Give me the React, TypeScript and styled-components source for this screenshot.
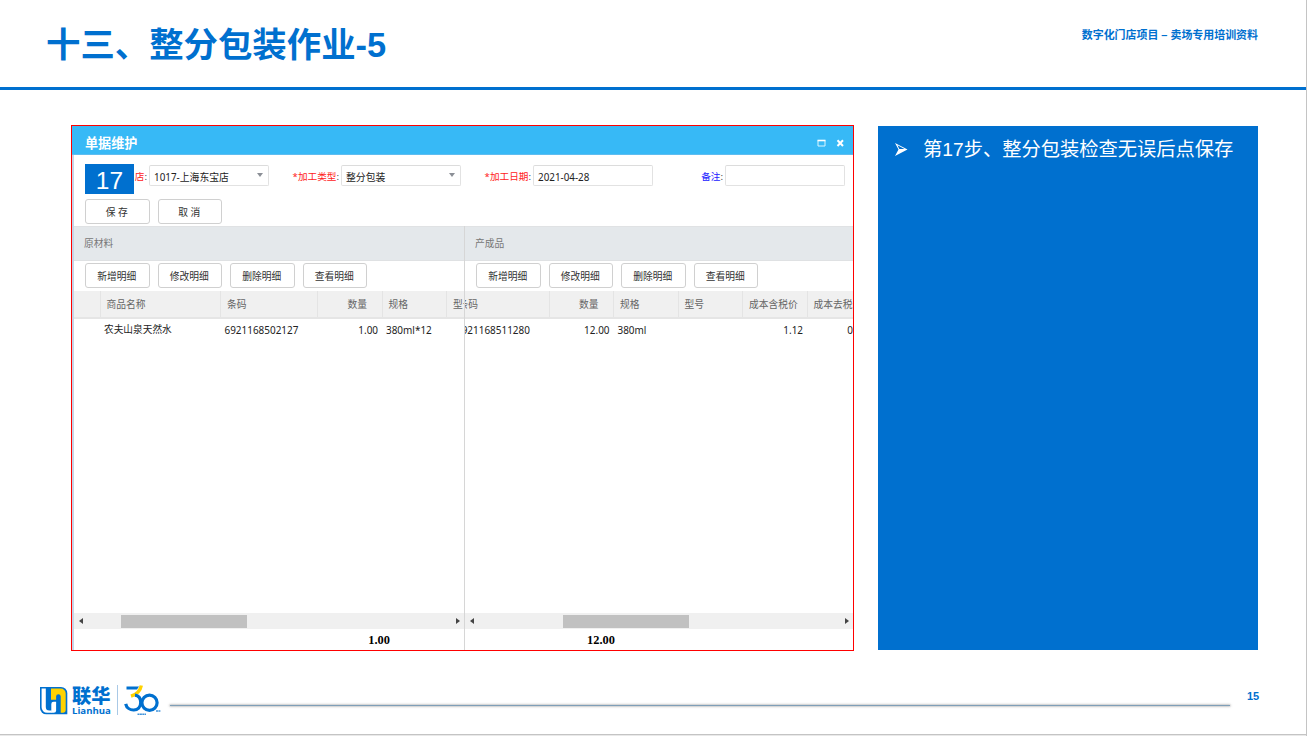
import React from 'react';
import styled, { createGlobalStyle } from 'styled-components';

const BLUE = '#0070cf';

const GlobalStyle = createGlobalStyle`
  * { box-sizing: border-box; }
  body {
    margin: 0;
    background: #fff;
    font-family: "Liberation Sans", "Noto Sans CJK SC", sans-serif;
  }
`;

const Slide = styled.div`
  width: 1307px;
  height: 736px;
  display: flex;
  flex-direction: column;
  background: #fff;
  border-right: 1px solid #c4c4c4;
  overflow: hidden;
`;

const Header = styled.header`
  height: 90px;
  flex: none;
  display: flex;
  justify-content: space-between;
  border-bottom: 3px solid ${BLUE};
  padding: 0 48px 0 46px;
  color: ${BLUE};
  font-weight: 700;
  white-space: nowrap;
`;

const Title = styled.h1`
  margin: 0;
  padding-top: 20px;
  font-size: 34.4px;
  line-height: 50px;
`;

const Project = styled.div`
  padding-top: 25px;
  font-size: 10.95px;
  line-height: 20px;
`;

const Main = styled.main`
  height: 561px;
  flex: none;
  display: flex;
  gap: 24px;
  padding: 35px 48px 0 71px;
`;

const Dialog = styled.section`
  width: 783px;
  height: 526px;
  display: flex;
  flex-direction: column;
  border: 1px solid #f00;
  font-family: "Noto Sans", "Noto Sans CJK SC", sans-serif;
  font-size: 9.75px;
  color: #222;
  white-space: nowrap;
  overflow: hidden;
`;

const TitleBar = styled.div`
  height: 29px;
  flex: none;
  display: flex;
  align-items: center;
  gap: 10px;
  padding: 5px 8px 0 13px;
  background: #37b9f6;
  border-bottom: 1px solid #5fbdf0;
  color: #fff;
`;

const DialogTitle = styled.div`
  flex: 1;
  font-size: 13.1px;
  font-weight: 700;
  line-height: 18px;
`;

const DialogBody = styled.div`
  flex: 1;
  display: flex;
  flex-direction: column;
  min-height: 0;
  border-left: 2px solid #c6d5e6;
`;

const Form = styled.div`
  height: 71px;
  flex: none;
  position: relative;
`;

const Fields = styled.div`
  display: flex;
  padding: 10px 0 0 3px;
`;

const Field = styled.div`
  width: 192px;
  display: flex;
  align-items: center;
`;

const Label = styled.label<{ $tone: string }>`
  width: 72px;
  padding: 2px 2px 0 0;
  text-align: right;
  color: ${(p) => p.$tone};
  font-size: 9.65px;
  line-height: 14px;
  span { color: #444; }
`;

const Input = styled.div`
  width: 120px;
  height: 21px;
  display: flex;
  align-items: center;
  justify-content: space-between;
  padding: 2px 5px 0 4px;
  border: 1px solid #e2e2e2;
  border-top-color: #dcdcdc;
  border-radius: 2px;
  font-size: 9.85px;
  line-height: 14px;
`;

const Caret = styled.i`
  border: 3.5px solid transparent;
  border-top: 4.5px solid #8b8f96;
  border-bottom: 0;
  margin-bottom: 4px;
`;

const StepBadge = styled.div`
  position: absolute;
  left: 11px;
  top: 9px;
  width: 49px;
  height: 30px;
  background: ${BLUE};
  color: #fff;
  font: 24.5px/33px "Liberation Sans", sans-serif;
  text-align: center;
`;

const Actions = styled.div<{ $top: number; $left?: number }>`
  display: flex;
  gap: 8px;
  padding: ${(p) => p.$top}px 0 0 ${(p) => p.$left ?? 11}px;
`;

const Button = styled.button`
  width: 64.5px;
  height: 25px;
  flex: none;
  padding: 2px 1px 0 0;
  border: 1px solid #d0d0d0;
  border-radius: 3px;
  background: #fff;
  font: inherit;
  line-height: 14px;
  color: #333;
`;

const Panes = styled.div`
  flex: 1;
  display: flex;
  min-height: 0;
`;

const Pane = styled.div<{ $width: number; $divided?: boolean }>`
  width: ${(p) => p.$width}px;
  flex: none;
  display: flex;
  flex-direction: column;
  overflow: hidden;
  border-right: ${(p) => (p.$divided ? '1px solid #d6d6d6' : '0')};
`;

const PaneTitle = styled.div`
  height: 35px;
  flex: none;
  padding-left: 10px;
  background: #e4e8eb;
  border-top: 1px solid #e0e2e4;
  border-bottom: 1px solid #dfe1e3;
  color: #777;
  line-height: 34px;
`;

const Tools = styled.div`
  height: 30px;
  flex: none;
`;

const Table = styled.div<{ $shift: number }>`
  flex: 1;
  margin-left: ${(p) => p.$shift}px;
`;

const HeadRow = styled.div`
  height: 28px;
  display: flex;
  background: #f0f0f0;
  border-bottom: 2px solid #e5e5e5;
  color: #666;
`;

const Row = styled.div`
  height: 24px;
  display: flex;
`;

const Cell = styled.div<{ $w: number; $right?: boolean; $head?: boolean }>`
  width: ${(p) => p.$w}px;
  flex: none;
  padding: ${(p) => (p.$head ? '0 14.5px 0 6px' : '0 4.5px 0 3.5px')};
  border-right: ${(p) => (p.$head ? '1px solid #e4e4e4' : '0')};
  text-align: ${(p) => (p.$right ? 'right' : 'left')};
  line-height: ${(p) => (p.$head ? 28 : 22)}px;
`;

const Value = styled.span<{ $latin: boolean }>`
  font-size: ${(p) => (p.$latin ? 9.95 : 9.7)}px;
`;

const ScrollBar = styled.div`
  height: 16px;
  flex: none;
  display: flex;
  align-items: center;
  background: #f0f0f0;
  padding: 0 4px 0 5px;
`;

const Arrow = styled.i<{ $dir: 'left' | 'right' }>`
  border: 3.5px solid transparent;
  border-${(p) => (p.$dir === 'left' ? 'right' : 'left')}: 4px solid #444;
  border-${(p) => p.$dir}: 0;
`;

const Track = styled.div<{ $before: number }>`
  flex: 1;
  padding-left: ${(p) => p.$before}px;
`;

const Thumb = styled.div`
  width: 126px;
  height: 13px;
  background: #c1c1c1;
`;

const Total = styled.div<{ $end: number }>`
  height: 21px;
  flex: none;
  width: ${(p) => p.$end}px;
  text-align: right;
  font: 700 12.4px/22px "Liberation Serif", serif;
  color: #000;
`;

const Note = styled.aside`
  width: 380px;
  height: 524px;
  margin-top: 1px;
  display: flex;
  align-items: flex-start;
  gap: 15px;
  padding: 9px 0 0 16px;
  background: ${BLUE};
  color: #fff;
  font-size: 19.25px;
  line-height: 29px;
  white-space: nowrap;
  svg { margin-top: 7px; flex: none; }
`;

const Footer = styled.footer`
  height: 83px;
  flex: none;
  display: flex;
  padding: 33px 46px 0 38px;
`;

const Brand = styled.div`
  width: 132px;
  display: flex;
`;

const BrandName = styled.div`
  width: 39px;
  margin-left: 4px;
  color: ${BLUE};
  white-space: nowrap;
`;

const BrandCn = styled.div`
  font: 900 19.2px/20px "Noto Sans CJK SC", sans-serif;
  margin-top: 1px;
`;

const BrandEn = styled.div`
  font: 700 9.6px/10px "Open Sans", sans-serif;
  margin-top: 1px;
`;

const BrandRule = styled.div`
  width: 1px;
  height: 30px;
  margin: 1px 6px 0;
  background: #a9c9e6;
`;

const FooterLine = styled.div`
  width: 1060px;
  height: 1px;
  margin-top: 21px;
  background: #7f9fb8;
  box-shadow: 0 0 2px 0.5px rgba(90, 90, 90, 0.5);
`;

const PageNumber = styled.div`
  margin-left: 17px;
  color: ${BLUE};
  font-size: 11px;
  font-weight: 700;
  line-height: 12px;
  padding-top: 6px;
`;

const BottomEdge = styled.div`
  height: 2px;
  flex: none;
  background: #e9e9e9;
  border-top: 1px solid #c4c4c4;
`;

const LogoMark = () => (
  <svg width="30" height="32" viewBox="-2 -3 30 32">
    <path d="M0 0h21a6.300 6.300 0 0 1 6.300 6.300v21H6.300A6.300 6.300 0 0 1 0 21z" fill={BLUE} />
    <path d="M1.600 1.500h4.200v18.500a3.500 3.500 0 0 0 3.500 3.500h2.500v2.300H7a5.500 5.500 0 0 1-5.400-5.500z" fill="#fff" />
    <path d="M11 1.500h9.700a5 5 0 0 1 5 5v16.800a2.400 2.400 0 0 1-2.400 2.400h-2.600V9.500a2.300 2.300 0 0 0-4.600 0v3.300H11z" fill="#ffd200" />
    <path d="M11.300 25.800V17a2.300 2.300 0 0 1 2.300-2.300h2.500v8.600a2.500 2.500 0 0 1-2.500 2.500z" fill="#fff" />
  </svg>
);

const Anniversary = () => (
  <svg width="37" height="32" viewBox="0 0 37 32">
    <path d="M2.500 2.500h12.500l-2 3h-10.500z" fill={BLUE} />
    <path d="M17.300 1.500c-1 5.500-4.300 8.800-10.300 10.700" stroke="#ffd200" strokeWidth="3.400" fill="none" />
    <path d="M11 11.200c4 .5 5.700 3.600 5.700 7.300c0 9.800-13.200 9.800-15 1.300" stroke={BLUE} strokeWidth="3.200" fill="none" />
    <circle cx="25.500" cy="18.700" r="7.600" stroke={BLUE} strokeWidth="3.200" fill="none" />
    <path d="M13.500 30.300h8.500M32 27h4.500" stroke={BLUE} strokeWidth="1.400" strokeDasharray="2 .4" opacity=".75" />
  </svg>
);

const detailActions = ['新增明细', '修改明细', '删除明细', '查看明细'];

type Column = { head: string; value: string; w: number; right?: boolean };

const materials: Column[] = [
  { head: '', value: '', w: 26.5 },
  { head: '商品名称', value: '农夫山泉天然水', w: 120.5 },
  { head: '条码', value: '6921168502127', w: 97 },
  { head: '数量', value: '1.00', w: 64.5, right: true },
  { head: '规格', value: '380ml*12', w: 64.5 },
  { head: '型号', value: '', w: 64.5 },
];

const products: Column[] = [
  { head: '条码', value: '6921168511280', w: 97 },
  { head: '数量', value: '12.00', w: 64.5, right: true },
  { head: '规格', value: '380ml', w: 64.5 },
  { head: '型号', value: '', w: 64.5 },
  { head: '成本含税价', value: '1.12', w: 64.5, right: true },
  { head: '成本去税价', value: '0', w: 50, right: true },
];

const PaneView = ({ title, columns, width, shift, divided, thumb, total, totalEnd }: {
  title: string; columns: Column[]; width: number; shift: number; divided?: boolean;
  thumb: number; total: string; totalEnd: number;
}) => (
  <Pane $width={width} $divided={divided}>
    <PaneTitle>{title}</PaneTitle>
    <Tools>
      <Actions $top={2}>
        {detailActions.map((a) => <Button key={a}>{a}</Button>)}
      </Actions>
    </Tools>
    <Table $shift={shift}>
      <HeadRow>
        {columns.map((c, i) => (
          <Cell key={i} $head $w={c.head === '成本去税价' ? 64.5 : c.w} $right={c.right && c.head === '数量'}>{c.head}</Cell>
        ))}
      </HeadRow>
      <Row>
        {columns.map((c, i) => (
          <Cell key={i} $w={c.w} $right={c.right}>
            <Value $latin={/^[\x20-\x7e]+$/.test(c.value)}>{c.value}</Value>
          </Cell>
        ))}
      </Row>
    </Table>
    <ScrollBar>
      <Arrow $dir="left" />
      <Track $before={thumb}><Thumb /></Track>
      <Arrow $dir="right" />
    </ScrollBar>
    <Total $end={totalEnd}>{total}</Total>
  </Pane>
);

export default function App() {
  return (
    <>
      <GlobalStyle />
      <Slide>
        <Header>
          <Title>十三、整分包装作业-5</Title>
          <Project>数字化门店项目 – 卖场专用培训资料</Project>
        </Header>
        <Main>
          <Dialog>
            <TitleBar>
              <DialogTitle>单据维护</DialogTitle>
              <svg width="9" height="8" viewBox="0 0 9 8">
                <path d="M1 1.500h7v5.500h-7z" fill="none" stroke="#d9f5ff" />
                <path d="M.5 1.500h8" stroke="#fff" strokeWidth="1.600" />
              </svg>
              <svg width="9" height="8" viewBox="0 0 9 8">
                <path d="M1.500 1.300l5.500 5.700M7 1.300l-5.500 5.700" stroke="#fff" strokeWidth="2" />
              </svg>
            </TitleBar>
            <DialogBody>
              <Form>
                <Fields>
                  <Field>
                    <Label $tone="#f22">店<span>:</span></Label>
                    <Input>1017-上海东宝店<Caret /></Input>
                  </Field>
                  <Field>
                    <Label $tone="#f22">*加工类型<span>:</span></Label>
                    <Input>整分包装<Caret /></Input>
                  </Field>
                  <Field>
                    <Label $tone="#f22">*加工日期<span>:</span></Label>
                    <Input>2021-04-28</Input>
                  </Field>
                  <Field>
                    <Label $tone="#22f">备注<span>:</span></Label>
                    <Input />
                  </Field>
                </Fields>
                <Actions $top={13}>
                  <Button>保 存</Button>
                  <Button>取 消</Button>
                </Actions>
                <StepBadge>17</StepBadge>
              </Form>
              <Panes>
                <PaneView title="原材料" columns={materials} width={391} shift={0} divided
                  thumb={38} total="1.00" totalEnd={316} />
                <PaneView title="产成品" columns={products} width={388} shift={-12.5}
                  thumb={89} total="12.00" totalEnd={150} />
              </Panes>
            </DialogBody>
          </Dialog>
          <Note>
            <svg width="14" height="15" viewBox="0 0 14 15">
              <path d="M1 1l12.500 6.500L1 14l3.500-6.500z" fill="#fff" />
              <path d="M3.500 3.200l7 3.800h-5.200z" fill={BLUE} />
            </svg>
            <div>第17步、整分包装检查无误后点保存</div>
          </Note>
        </Main>
        <Footer>
          <Brand>
            <LogoMark />
            <BrandName>
              <BrandCn>联华</BrandCn>
              <BrandEn>Lianhua</BrandEn>
            </BrandName>
            <BrandRule />
            <Anniversary />
          </Brand>
          <FooterLine />
          <PageNumber>15</PageNumber>
        </Footer>
        <BottomEdge />
      </Slide>
    </>
  );
}
